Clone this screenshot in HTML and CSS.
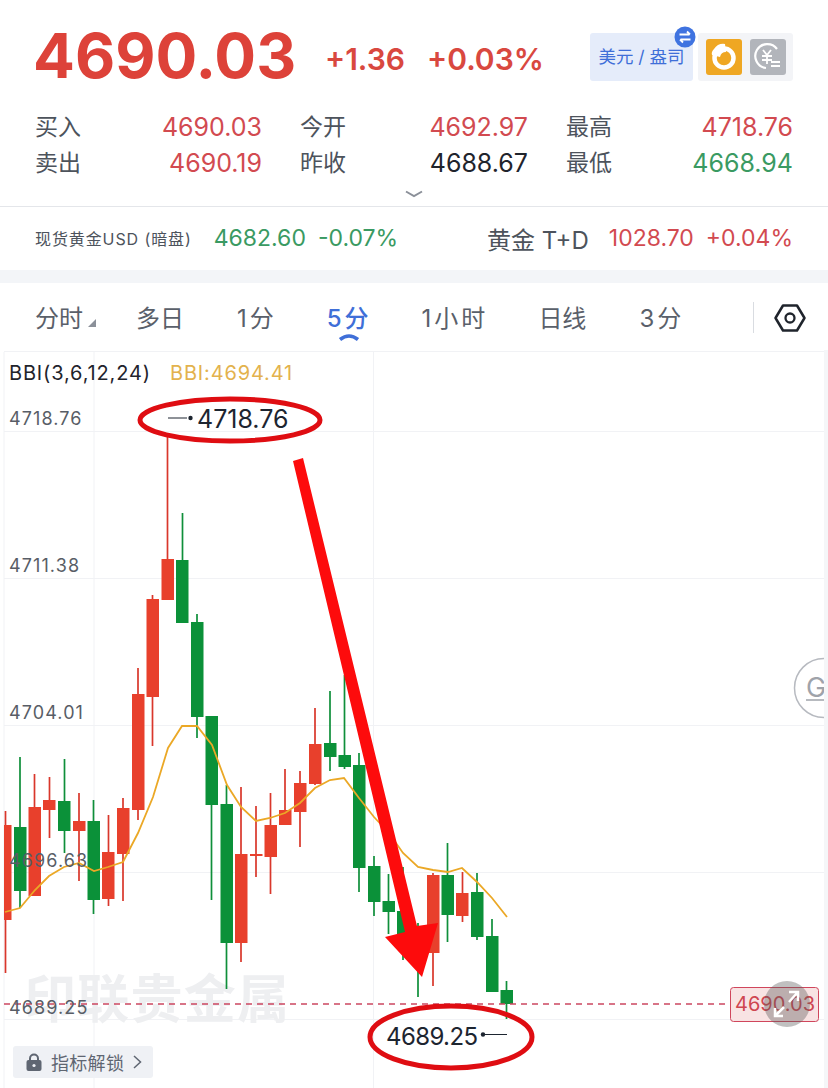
FILE: index.html
```html
<!DOCTYPE html>
<html>
<head>
    <meta charset="utf-8">
    <link rel="stylesheet" href="styles.css">
</head>
<body>
  <div class="quote">
    <div class="headline">
      <span class="last">4690.03</span>
      <span class="chg">+1.36</span>
      <span class="chg">+0.03%</span>
      <div class="tools">
        <div class="unit">美元 / 盎司
          <svg class="swap" width="22" height="22" viewBox="0 0 22 22">
            <circle cx="11" cy="11" r="10.5" fill="#3f73e0"/>
            <path d="M5.500 8.500h10M13 5.500l3 3M16.500 13.500h-10M9 16.500l-3-3" fill="none" stroke="#fff" stroke-width="1.800"/>
          </svg>
        </div>
        <div class="switches">
          <svg width="36" height="36" viewBox="0 0 36 36">
            <rect width="36" height="36" rx="3" fill="#efa723"/>
            <circle cx="18" cy="19" r="9.500" fill="none" stroke="#fff" stroke-width="4.500"/>
            <path d="M8 10q4-6 11-5l1 8q-5 0-6 5l-8-2q-1-3 2-6z" fill="#fff"/>
          </svg>
          <svg width="36" height="36" viewBox="0 0 36 36">
            <rect width="36" height="36" rx="3" fill="#b2b5bb"/>
            <path d="M27 10a12 12 0 1 0-11 19" fill="none" stroke="#fff" stroke-width="2.200"/>
            <path d="M13 11l4 5 4-5M12 17h10M12 21h10M17 16v9M21 23h9M21 27h9" fill="none" stroke="#fff" stroke-width="1.800"/>
          </svg>
        </div>
      </div>
    </div>
    <div class="grid">
      <span class="lbl">买入</span><span class="val up">4690.03</span>
      <span class="lbl">今开</span><span class="val up">4692.97</span>
      <span class="lbl">最高</span><span class="val up">4718.76</span>
      <span class="lbl">卖出</span><span class="val up">4690.19</span>
      <span class="lbl">昨收</span><span class="val">4688.67</span>
      <span class="lbl">最低</span><span class="val down">4668.94</span>
    </div>
    <svg class="more" width="20" height="8" viewBox="0 0 20 8"><path d="M2 1.500L10 6l8-4.500" fill="none" stroke="#8b9099" stroke-width="2"/></svg>
  </div>

  <div class="ticker">
    <span class="name">现货黄金USD (暗盘)</span>
    <span class="tick down">4682.60</span>
    <span class="tick down">-0.07%</span>
    <span class="name2">黄金 T+D</span>
    <span class="tick up">1028.70</span>
    <span class="tick up">+0.04%</span>
  </div>

  <div class="tabs">
    <span class="tab tab-more">分时</span>
    <span class="tab">多日</span>
    <span class="tab tab-num">1分</span>
    <span class="tab tab-num active">5分
      <svg class="caret" width="24" height="8" viewBox="0 0 24 8"><path d="M3 6.500Q12-.5 21 6.500" fill="none" stroke="#3f6fd8" stroke-width="3.600"/></svg>
    </span>
    <span class="tab tab-num">1小时</span>
    <span class="tab">日线</span>
    <span class="tab tab-num">3分</span>
    <span class="sep"></span>
    <svg class="hex" width="32" height="32" viewBox="0 0 32 32">
      <path d="M9 3.500h14L30.500 16 23 28.500H9L1.500 16z" fill="none" stroke="#1f242c" stroke-width="2.500" stroke-linejoin="round"/>
      <circle cx="16" cy="16" r="4.500" fill="none" stroke="#1f242c" stroke-width="2.300"/>
    </svg>
  </div>

  <div class="chart">
    <svg class="plot" width="828" height="738" viewBox="0 350 828 738">
      <g class="grid-lines">
        <path d="M4 431.500H824M4 578.500H824M4 725.500H824M4 872.500H824M4 1019.500H824M94 352V1088M373.500 352V1088M4 352V1088M4 351.500H824"/>
      </g>
      <text class="mark" x="24" y="1018" textLength="265">印联贵金属</text>

      <g class="wick-up">
        <path d="M5.500 811V973M34.500 774V896M49.500 777V838M79 793V881M108.500 815V906M123 798V901M138 668V820M152.500 595V746M167.500 437V600M241 787V962M256 806V877M270.500 793V894M285 769V825M300 771V847M315 708V785M433 873V986M462.500 872V922"/>
      </g>
      <g class="wick-down">
        <path d="M20 757V908M64.500 759V853M93.500 800V914M182.500 513V623M197 614V738M211.500 716V900M226.500 785V989M330 691V771M344.500 675V769M359 753V892M374 856V916M388.500 874V934M403 867V960M418 923V997M447.500 843V942M477 873V940M492 919V992M506.500 981V1019"/>
      </g>
      <g class="body-up">
        <rect x="4" y="825" width="7.500" height="95"/>
        <rect x="28.500" y="807" width="12.500" height="89"/>
        <rect x="43" y="800" width="12.500" height="10"/>
        <rect x="73" y="821" width="12.500" height="10"/>
        <rect x="102" y="852" width="12.500" height="47"/>
        <rect x="117" y="808" width="12.500" height="46"/>
        <rect x="132" y="694" width="12.500" height="116"/>
        <rect x="146.500" y="599" width="12.500" height="98"/>
        <rect x="161.500" y="559" width="12.500" height="41"/>
        <rect x="235" y="854" width="12.500" height="89"/>
        <rect x="250" y="854" width="12.500" height="2"/>
        <rect x="264.500" y="825" width="12.500" height="32"/>
        <rect x="279" y="810" width="12.500" height="15"/>
        <rect x="294" y="783" width="12.500" height="29"/>
        <rect x="309" y="744" width="12.500" height="40"/>
        <rect x="427" y="875" width="12.500" height="78"/>
        <rect x="456" y="893" width="12.500" height="23"/>
      </g>
      <g class="body-down">
        <rect x="14" y="827" width="12.500" height="64"/>
        <rect x="58" y="801" width="12.500" height="30"/>
        <rect x="87.500" y="821" width="12.500" height="79"/>
        <rect x="176" y="560" width="12.500" height="63"/>
        <rect x="191" y="622" width="12.500" height="95"/>
        <rect x="205.500" y="716" width="12.500" height="89"/>
        <rect x="220.500" y="804" width="12.500" height="139"/>
        <rect x="324" y="743" width="12.500" height="14"/>
        <rect x="338.500" y="755" width="12.500" height="12"/>
        <rect x="353" y="765" width="12.500" height="103"/>
        <rect x="368" y="866" width="12.500" height="36"/>
        <rect x="382.500" y="901" width="12.500" height="11"/>
        <rect x="397" y="911" width="12.500" height="29"/>
        <rect x="412" y="935" width="12.500" height="25"/>
        <rect x="441.500" y="875" width="12.500" height="40"/>
        <rect x="471" y="892" width="12.500" height="45"/>
        <rect x="486" y="936" width="12.500" height="56"/>
        <rect x="500.500" y="990" width="12.500" height="14"/>
      </g>

      <polyline class="bbi" points="5,912 20,908 35,890 49,876 64,867 79,863 94,871 108,867 123,862 138,833 153,797 168,748 182,726 197,726 212,745 227,785 241,807 256,821 270,818 285,813 300,803 315,788 330,780 344,778 359,798 374,817 389,833 403,853 418,867 433,870 448,872 462,868 477,882 492,898 507,917"/>
      <path class="price-line" d="M4 1004H730"/>

      <text class="axis" x="9" y="425">4718.76</text>
      <text class="axis" x="9" y="572">4711.38</text>
      <text class="axis" x="9" y="719">4704.01</text>
      <text class="axis" x="9" y="867">4696.63</text>
      <text class="axis" x="9" y="1014">4689.25</text>
      <text class="legend" x="9" y="380">BBI(3,6,12,24)</text>
      <text class="legend bbi-txt" x="170" y="380">BBI:4694.41</text>

      <path class="pin" d="M168 418H187"/>
      <circle cx="190.500" cy="418" r="2.200" fill="#1d2530"/>
      <text class="hi-lo" x="197" y="428">4718.76</text>
      <text class="hi-lo low" x="386" y="1045">4689.25</text>
      <circle cx="483" cy="1034.500" r="2.200" fill="#1d2530"/>
      <path class="pin" d="M485 1034.500H507"/>

      <ellipse class="ring" cx="230" cy="420" rx="90" ry="21"/>
      <ellipse class="ring" cx="451" cy="1037" rx="81" ry="31"/>
      <polygon class="arrow" points="293,461 303,458 417,926 438,923 422,977 385,937 405,932"/>

      <circle class="g-btn" cx="824" cy="688" r="29.500"/>
      <text class="g-txt" x="806" y="697">G</text>
      <path class="g-line" d="M806 700H828"/>
      <rect class="edge" x="824" y="350" width="4" height="738"/>

      <rect class="last-tag" x="730.500" y="987.500" width="88" height="34" rx="3"/>
      <text class="last-txt" x="735" y="1011">4690.03</text>
      <circle class="zoom-bg" cx="787" cy="1004" r="23"/>
      <path class="zoom-ic" d="M776 1015l8-8M775 1008v8h8M789 1002l8-9M789 992h9v9"/>
    </svg>

    <div class="unlock">
      <svg width="16" height="18" viewBox="0 0 16 18">
        <path d="M4 8V5.500a4 4 0 0 1 8 0V8" fill="none" stroke="#5f6672" stroke-width="2"/>
        <rect x="0.500" y="7" width="15" height="11" rx="2" fill="#5f6672"/>
        <circle cx="8" cy="12.500" r="1.600" fill="#eff1f5"/>
      </svg>
      <span>指标解锁</span>
      <svg width="9" height="14" viewBox="0 0 9 14"><path d="M1 1l6.500 6L1 13" fill="none" stroke="#5f6672" stroke-width="1.500"/></svg>
    </div>
  </div>
</body>
</html>
```
FILE: styles.css
```css
html, body {
  margin: 0;
  padding: 0;
  height: 1088px;
  overflow: hidden;
}
body {
  width: 828px;
  background: #fff;
  color: #1f242c;
  font-family: Inter, "Noto Sans CJK SC", sans-serif;
}
.up { color: #d24a50; }
.down { color: #3a9a62; }

.quote {
  position: relative;
  height: 207px;
  padding: 0 35px;
  box-sizing: border-box;
  border-bottom: 1px solid #e4e6ea;
}
.headline {
  display: flex;
  align-items: center;
  height: 107px;
}
.last {
  font-size: 62px;
  font-weight: 700;
  color: #dd4239;
  width: 292px;
  margin-top: 3px;
  margin-left: -2px;
}
.chg {
  font-size: 30px;
  font-weight: 600;
  color: #d9483f;
  margin-right: 22px;
  margin-top: 11px;
}
.tools {
  display: flex;
  margin-left: auto;
  margin-top: 7px;
  gap: 5px;
}
.unit {
  position: relative;
  width: 103px;
  height: 48px;
  line-height: 48px;
  border-radius: 3px;
  background: #e5ecfa;
  color: #3f6fd8;
  font-size: 17.500px;
  text-align: center;
  white-space: nowrap;
}
.swap {
  position: absolute;
  right: -3px;
  top: -7px;
}
.switches {
  display: flex;
  gap: 8px;
  align-items: center;
  height: 48px;
  padding: 0 7px 0 8px;
  border-radius: 3px;
  background: #f3f4f7;
}
.grid {
  display: grid;
  grid-template-columns: 60px 205px 60px 206px 60px 1fr;
  grid-auto-rows: 36px;
  align-items: center;
}
.lbl {
  font-size: 23px;
  color: #4d535c;
}
.val {
  font-size: 25px;
  text-align: right;
  padding-right: 38px;
  margin-top: 4px;
}
.val:nth-child(6n) { padding-right: 0; }
.more {
  position: absolute;
  left: 404px;
  top: 190px;
}

.ticker {
  display: flex;
  align-items: center;
  height: 62px;
  padding: 0 35px 1px;
  border-bottom: 13px solid #f3f5f8;
}
.name {
  font-size: 16px;
  letter-spacing: 0.9px;
  color: #4d535c;
  margin-right: 22px;
}
.name2 {
  font-size: 24px;
  color: #4d535c;
  margin-left: auto;
  margin-right: 20px;
}
.tick {
  font-size: 23px;
  margin-right: 12px;
}
.tick:last-child { margin-right: 0; }

.tabs {
  position: relative;
  display: flex;
  align-items: center;
  height: 67px;
  padding-left: 35px;
  color: #5a606a;
  font-size: 24px;
}
.tab {
  position: relative;
  margin-right: 53px;
  white-space: nowrap;
}
.tab-num {
  letter-spacing: 3px;
  margin-right: 50px;
}
.tab-more::after {
  content: "";
  position: absolute;
  right: -13px;
  bottom: 7px;
  border-style: solid;
  border-width: 0 0 8px 8px;
  border-color: transparent transparent #8b9099 transparent;
}
.active {
  color: #3f6fd8;
  font-weight: 500;
}
.caret {
  position: absolute;
  left: 10px;
  bottom: -7px;
}
.sep {
  position: absolute;
  left: 753px;
  top: 19px;
  height: 31px;
  border-left: 1px solid #d9dce1;
}
.hex {
  position: absolute;
  left: 774px;
  top: 19px;
}

.chart {
  position: relative;
  height: 738px;
}
.plot {
  display: block;
}
.grid-lines path {
  fill: none;
  stroke: #f1f2f5;
  stroke-width: 1;
}
.mark {
  font-size: 52px;
  font-weight: 700;
  fill: #eeeff1;
  filter: blur(0.6px);
  font-family: "Noto Sans CJK SC", sans-serif;
}
.wick-up path, .wick-down path {
  fill: none;
  stroke-width: 1.700;
}
.wick-up path { stroke: #d9372b; }
.wick-down path { stroke: #0f8f3a; }
.body-up rect { fill: #e8402c; }
.body-down rect { fill: #0b9139; }
.bbi {
  fill: none;
  stroke: #eba826;
  stroke-width: 1.800;
}
.price-line {
  fill: none;
  stroke: #cc4760;
  stroke-width: 1.400;
  stroke-dasharray: 6 5;
}
.axis {
  font-size: 18px;
  letter-spacing: 1.100px;
  fill: #585d66;
}
.legend {
  font-size: 20px;
  letter-spacing: 0.85px;
  fill: #1f242c;
}
.bbi-txt { fill: #e3b24d; }
.pin {
  fill: none;
  stroke: #1d2530;
  stroke-width: 1;
}
.hi-lo {
  font-size: 25px;
  fill: #1d2530;
}
.low {
  font-size: 24px;
  letter-spacing: -0.6px;
}
.ring {
  fill: none;
  stroke: #df0d12;
  stroke-width: 5;
}
.arrow { fill: #fd0b0c; }
.g-btn {
  fill: #fff;
  stroke: #b7bac0;
  stroke-width: 1.500;
}
.g-txt {
  font-size: 27px;
  fill: #9fa3aa;
}
.g-line {
  fill: none;
  stroke: #9fa3aa;
  stroke-width: 1.500;
}
.edge { fill: #f5f6f8; }
.last-tag {
  fill: #f8e3e3;
  stroke: #d0465c;
  stroke-width: 1;
}
.last-txt {
  font-size: 20px;
  fill: #cf4650;
}
.zoom-bg { fill: rgba(90, 90, 90, 0.38); }
.zoom-ic {
  fill: none;
  stroke: #fff;
  stroke-width: 2.500;
}

.unlock {
  position: absolute;
  left: 13px;
  bottom: 10px;
  display: flex;
  align-items: center;
  gap: 9px;
  height: 32px;
  padding: 0 11px 0 13px;
  border-radius: 3px;
  background: #eff1f5;
  color: #5f6672;
  font-size: 18px;
  letter-spacing: 0.3px;
}
```
